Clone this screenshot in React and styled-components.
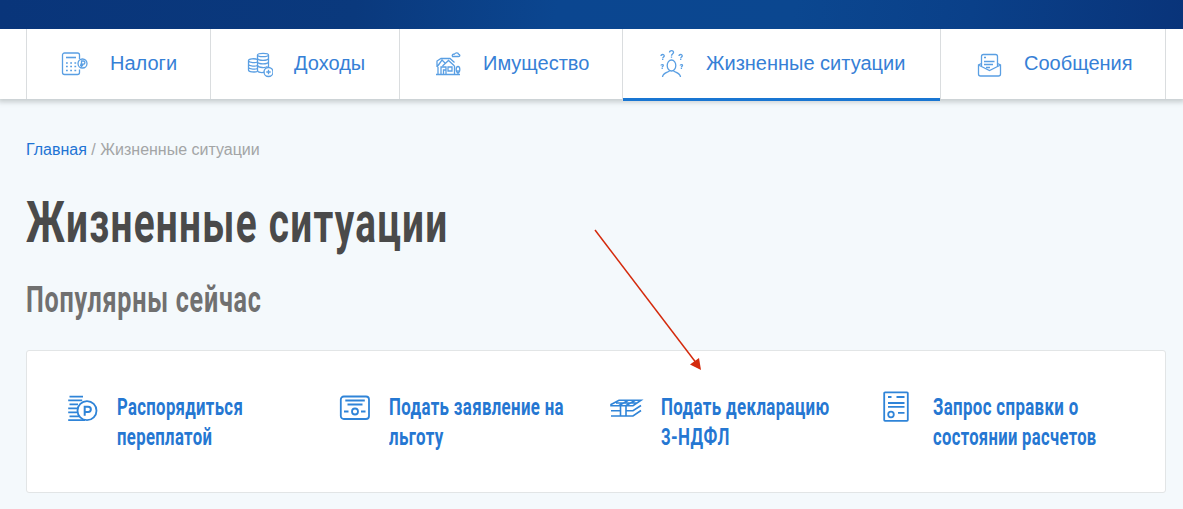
import styled, { createGlobalStyle } from 'styled-components'

const GlobalStyle = createGlobalStyle`
	* { box-sizing: border-box; }
	body {
		margin: 0;
		background: #f4f9fc;
		font-family: "Liberation Sans", Arial, sans-serif;
		overflow: hidden;
	}
	h1, h2 { margin: 0; }
`

const Page = styled.div`
	position: relative;
	height: 509px;
`

const Banner = styled.header`
	height: 29px;
	background: linear-gradient(97deg, #09357a 0%, #0a397d 30%, #0b4690 47%, #0b4790 67%, #0a4089 82%, #09347a 100%);
`

const Nav = styled.nav`
	position: relative;
	display: flex;
	height: 70px;
	padding-left: 26px;
	background: #fff;
	box-shadow: 0 1px 5px 2px rgba(90, 100, 100, 0.3);
	clip-path: inset(0 0 -10px 0);
`

const NavItem = styled.a`
	display: flex;
	align-items: center;
	width: ${({ $width }) => $width}px;
	height: ${({ $active }) => ($active ? 72 : 70)}px;
	padding: 0 0 ${({ $active }) => ($active ? 3 : 1)}px 34px;
	border-left: 1px solid #dadddf;
	color: #3680d6;
	font-size: 20px;
	white-space: nowrap;
	background: ${({ $active }) => ($active ? 'linear-gradient(#1976d2, #1976d2) bottom / 100% 3px no-repeat' : 'none')};

	&:last-child {
		border-right: 1px solid #dadddf;
	}
`

const NavIcon = styled.svg`
	flex: none;
	width: 28px;
	height: 28px;
	margin-right: 21px;
	fill: none;
	stroke: #5a9fe3;
	stroke-width: 1.3;
`

const Main = styled.main`
	padding: 41px 17px 0 26px;
`

const Breadcrumbs = styled.div`
	height: 20px;
	font-size: 16px;
	line-height: 20px;
	color: #a3a5a6;

	a {
		color: #1e74d4;
	}
`

// narrow heading face: the text is squeezed horizontally
const Narrow = styled.span`
	display: block;
	width: max-content;
	font-family: Roboto, sans-serif;
	white-space: nowrap;
	transform: scaleX(${({ $scale }) => $scale});
	transform-origin: left;
`

const Title = styled.h1`
	margin-top: 33px;
	color: #4a4a4a;
	font-size: 57px;
	font-weight: 700;
	line-height: 60px;
	letter-spacing: 1.87px;
`

const Subtitle = styled.h2`
	margin-top: 27px;
	color: #707070;
	font-size: 37px;
	font-weight: 700;
	line-height: 40px;
	letter-spacing: 1.1px;
`

const Panel = styled.section`
	display: grid;
	grid-template-columns: repeat(4, 272px);
	height: 143px;
	margin-top: 30px;
	padding: 41px 0 0 40px;
	background: #fff;
	border: 1px solid #e2e5e6;
	border-radius: 3px;
`

const Service = styled.a`
	display: flex;
	color: #2577d2;
	font-size: 24px;
	font-weight: 700;
	line-height: 30px;
	letter-spacing: 0.5px;
`

const ServiceIcon = styled.svg`
	flex: none;
	width: 32px;
	height: 34px;
	margin-right: 18px;
	overflow: visible;
	fill: none;
	stroke: #2f84d8;
	stroke-width: 1.8;
`

const Arrow = styled.svg`
	position: absolute;
	left: 590px;
	top: 225px;
	width: 120px;
	height: 150px;
`

const icons = {
	taxes: (
		<>
			<path d="M18.500 9V5a2 2 0 0 0-2-2h-13a2 2 0 0 0-2 2v17.500a2 2 0 0 0 2 2h13a2 2 0 0 0 2-2v-3" />
			<path d="M5 7.500h10" strokeWidth="1.600" />
			<path d="M5 13h11M5 16.500h11M5 20.500h11" strokeWidth="1.600" strokeDasharray="1.800 2.400" />
			<circle cx="21.500" cy="13.500" r="4.500" />
			<path d="M20.500 17v-6h1.800a1.500 1.500 0 0 1 0 3.200h-3M19 15.500h3.200" />
		</>
	),
	income: (
		<>
			<ellipse cx="18" cy="5" rx="5.500" ry="1.700" />
			<path d="M12.500 5v15.500c0 2 5 2.500 7 1.500M23.500 5v12" />
			<path d="M12.500 8.500c1 2.500 10 2.500 11 0M12.500 12c1 2.500 10 2.500 11 0M12.500 15.500c1 2.500 8 2.500 10 1" />
			<path d="M12.500 9.500c-3-1.300-9-.8-9 1v9.500c0 2 6 2.500 9 1.500M3.500 11c1 2 7 2 9 1M3.500 14.500c1 2 7 2 9 1M3.500 17.500c1 2 7 2 9 1" />
			<circle cx="23.500" cy="22" r="4.500" />
			<path d="M23.500 19.800v4.400M21.300 22h4.400" />
		</>
	),
	property: (
		<>
			<path d="M2 24.500h24M4 24v-7M7 24v-7h5v7M9.500 24v-4h2.500M14 17h4v4h-4zM20.500 24v-8M20.500 16l-6-5.500-6 5.500M3 17v-6l4-2.500h9l4.500 4M3 17l5-7 3 3" />
			<ellipse cx="24" cy="19.500" rx="1.800" ry="3" />
			<path d="M24 20v4.500M18.500 6.500c-1-1.800.8-2.500 2-2.500 1-1.800 4-1.500 4 .2 1.800.3 1.800 2.300 0 2.300z" />
		</>
	),
	situations: (
		<>
			<ellipse cx="14.500" cy="15.500" rx="4.300" ry="5.500" />
			<path d="M12.500 20.500c0 2-6.500 1.500-7 6.500M16.500 20.500c0 2 6.500 1.500 7 6.500" />
			<path d="M12.500 2.500c0-2.500 4.500-2.300 4 .2-.2 1.300-2 1.300-2 3M14.500 6.500v1.300M4 6c0-2 3.500-2 3.200 0-.2 1-1.500 1-1.500 2.500M5.700 9v1M22 6c0-2 3.500-2 3.200 0-.2 1-1.500 1-1.500 2.500M23.700 9v1" />
			<path d="M4 15.500c0-1.300 2.500-1.300 2.300 0-.1.700-1.100.8-1.100 2M23.200 15.500c0-1.300 2.500-1.300 2.300 0-.1.700-1.100.8-1.100 2M5.200 18v1M24.400 18v1" />
		</>
	),
	messages: (
		<>
			<path d="M6.500 16V6.500a2 2 0 0 1 2-2h12a2 2 0 0 1 2 2V16" />
			<path d="M6.500 13.500 3.500 15v9a2 2 0 0 0 2 2h18a2 2 0 0 0 2-2v-9l-3-1.500M3.500 15l11 5.500 11-5.500" />
			<path d="M9 7.500h2M9 11.500h10.500M9 14.500h9M11 17.500h4" />
		</>
	),
	overpay: (
		<>
			<path d="M2.500 4.600H16M1.200 8.400h14M2.500 12.400H11M1.200 16.400h9M1.200 20.300h9M2.500 24.300H12M1.200 28.200H18" />
			<circle cx="20" cy="18.700" r="9.500" />
			<path d="M17.700 23.700v-9h3.500a2.600 2.600 0 0 1 0 5.300h-3.500" strokeWidth="2" />
		</>
	),
	benefit: (
		<>
			<rect x="1.800" y="4.500" width="28.200" height="22.500" rx="3" />
			<path d="M6.300 8.500h19.500M8.500 12.500h15M5 19.500h4.500M22 19.500h4.500" />
			<circle cx="16" cy="19.500" r="3" />
		</>
	),
	declaration: (
		<path
			d="M0 13.700h22l8-5.500H8L0 12.500zM8 13.500l9-5M15 13.500l9-5M5 11h21M0 18.700h9M15 18.700h7l8-5.200M0 24h22l8-5.500M9.500 14v10M15 14v10"
			strokeWidth="1.600"
		/>
	),
	statement: (
		<>
			<rect x="1.200" y="0.300" width="23.600" height="28.500" rx=".8" />
			<path d="M5 5h3.500M13.500 5H21.500M5 11h16.500M5 14.800h16.500M15 20.800h6.500" />
			<circle cx="8" cy="22.500" r="2.800" />
		</>
	),
}

const sections = [
	{ icon: 'taxes', label: 'Налоги', width: 184 },
	{ icon: 'income', label: 'Доходы', width: 189 },
	{ icon: 'property', label: 'Имущество', width: 223 },
	{ icon: 'situations', label: 'Жизненные ситуации', width: 318, active: true },
	{ icon: 'messages', label: 'Сообщения', width: 226 },
]

const services = [
	{ icon: 'overpay', lines: [['Распорядиться', 0.695], ['переплатой', 0.696]] },
	{ icon: 'benefit', lines: [['Подать заявление на', 0.7], ['льготу', 0.705]] },
	{ icon: 'declaration', lines: [['Подать декларацию', 0.703], ['3-НДФЛ', 0.703]] },
	{ icon: 'statement', lines: [['Запрос справки о', 0.702], ['состоянии расчетов', 0.69]] },
]

const App = () => {
	return (
		<Page>
			<GlobalStyle />
			<Banner />
			<Nav>
				{sections.map(({ icon, label, width, active }) => (
					<NavItem key={icon} $width={width} $active={active}>
						<NavIcon viewBox="0 0 28 28">{icons[icon]}</NavIcon>
						{label}
					</NavItem>
				))}
			</Nav>
			<Main>
				<Breadcrumbs>
					<a>Главная</a> / Жизненные ситуации
				</Breadcrumbs>
				<Title>
					<Narrow $scale={0.68}>Жизненные ситуации</Narrow>
				</Title>
				<Subtitle>
					<Narrow $scale={0.68}>Популярны сейчас</Narrow>
				</Subtitle>
				<Panel>
					{services.map(({ icon, lines }) => (
						<Service key={icon}>
							<ServiceIcon viewBox="0 0 32 34">{icons[icon]}</ServiceIcon>
							<div>
								{lines.map(([text, scale]) => (
									<Narrow key={text} $scale={scale}>{text}</Narrow>
								))}
							</div>
						</Service>
					))}
				</Panel>
			</Main>
			<Arrow viewBox="0 0 120 150">
				<path d="M5 5 107 139" stroke="#d42a0c" strokeWidth="1.500" />
				<path d="M111 145 100 139.500 109 133z" fill="#d42a0c" />
			</Arrow>
		</Page>
	)
}

export default App
